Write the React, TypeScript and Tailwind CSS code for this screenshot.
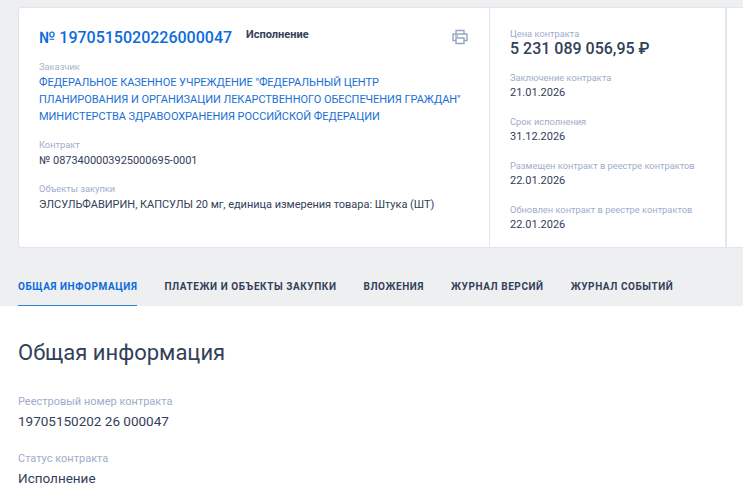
const font = "font-['Roboto',sans-serif]";

const sideItems = [
  { label: "Заключение контракта", value: "21.01.2026" },
  { label: "Срок исполнения", value: "31.12.2026" },
  { label: "Размещен контракт в реестре контрактов", value: "22.01.2026" },
  { label: "Обновлен контракт в реестре контрактов", value: "22.01.2026" },
];

const tabs = ["ПЛАТЕЖИ И ОБЪЕКТЫ ЗАКУПКИ", "ВЛОЖЕНИЯ", "ЖУРНАЛ ВЕРСИЙ", "ЖУРНАЛ СОБЫТИЙ"];

function PrintIcon() {
  return (
    <svg width="16" height="16" viewBox="0 0 16 16" fill="none" stroke="#98a6c4" strokeWidth="1.4">
      <path d="M4 5V1.5h8V5" />
      <path d="M4 11.5H1V5h14v6.5h-3" />
      <path d="M4 9h8v5.5H4z" />
      <path d="M3 7h3" />
    </svg>
  );
}

export default function App() {
  return (
    <div className={`${font} h-[493px] w-[743px] overflow-hidden bg-white text-[#334059]`}>
      <div className="h-[306px] bg-[#eeeff1] pl-[18px] pt-[7px]">
        {/* contract card */}
        <div className="flex h-[241px] rounded-l-[3px] border border-r-0 border-[#e2e6ec] bg-white">
          <div className="w-[471px] shrink-0 border-r border-[#e2e6ec] pl-5 pr-5 pt-[19px]">
            <div className="flex items-start">
              <a className="text-[16px] leading-[21px] font-medium text-[#0d6bdc]">№ 1970515020226000047</a>
              <span className="ml-[14px] text-[11px] leading-[15px] font-bold text-[#334059]">Исполнение</span>
              <span className="mt-[2px] ml-auto mr-[1px]">
                <PrintIcon />
              </span>
            </div>
            <div className="mt-[13px] text-[9.3px] leading-[12px] text-[#a9b4c9]">Заказчик</div>
            <div className="mt-[1px] whitespace-nowrap text-[11px] leading-[17px] tracking-[-0.05px] text-[#1a6fd4]">
              ФЕДЕРАЛЬНОЕ КАЗЕННОЕ УЧРЕЖДЕНИЕ "ФЕДЕРАЛЬНЫЙ ЦЕНТР
              <br />
              ПЛАНИРОВАНИЯ И ОРГАНИЗАЦИИ ЛЕКАРСТВЕННОГО ОБЕСПЕЧЕНИЯ ГРАЖДАН"
              <br />
              МИНИСТЕРСТВА ЗДРАВООХРАНЕНИЯ РОССИЙСКОЙ ФЕДЕРАЦИИ
            </div>
            <div className="mt-[14px] text-[9.3px] leading-[12px] text-[#a0accb]">Контракт</div>
            <div className="mt-[2px] text-[11px] leading-[16px] tracking-[-0.03px]">№ 0873400003925000695-0001</div>
            <div className="mt-[14px] text-[9.3px] leading-[12px] text-[#a0accb]">Объекты закупки</div>
            <div className="mt-[2px] whitespace-nowrap text-[11px] leading-[16px] tracking-[-0.03px]">ЭЛСУЛЬФАВИРИН, КАПСУЛЫ 20 мг, единица измерения товара: Штука (ШТ)</div>
          </div>
          <div className="w-[237px] shrink-0 border-r-2 border-[#e2e6ef] pl-5 pt-[20px]">
            <div className="text-[9.3px] leading-[12px] text-[#a0accb]">Цена контракта</div>
            <div className="text-[16px] leading-[18px] font-medium">5 231 089 056,95 ₽</div>
            {sideItems.map((item) => (
              <div key={item.label} className="mt-[14px] pb-[1px]">
                <div className="text-[9.3px] leading-[12px] text-[#a0accb]">{item.label}</div>
                <div className="mt-[1px] text-[11px] leading-[16px]">{item.value}</div>
              </div>
            ))}
          </div>
          <div className="flex-1" />
        </div>
        {/* tabs */}
        <div className="mt-[23px] flex gap-[27px] text-[10px] font-bold tracking-[0.575px]">
          <div className="h-[35px] border-b border-[#2a84de] pt-[9px] leading-[14px] text-[#0d6bdc]">ОБЩАЯ ИНФОРМАЦИЯ</div>
          {tabs.map((t) => (
            <div key={t} className="pt-[9px] leading-[14px]">
              {t}
            </div>
          ))}
        </div>
      </div>
      <div className="pl-[18px] pt-[35px]">
        <h1 className="text-[22px] leading-[24px] font-normal">Общая информация</h1>
        <div className="mt-[30px] text-[11px] leading-[14px] text-[#a0accb]">Реестровый номер контракта</div>
        <div className="mt-[3px] text-[13.5px] leading-[18px]">19705150202 26 000047</div>
        <div className="mt-[22px] text-[11px] leading-[14px] text-[#a0accb]">Статус контракта</div>
        <div className="mt-[3px] text-[13.5px] leading-[18px]">Исполнение</div>
      </div>
    </div>
  );
}
